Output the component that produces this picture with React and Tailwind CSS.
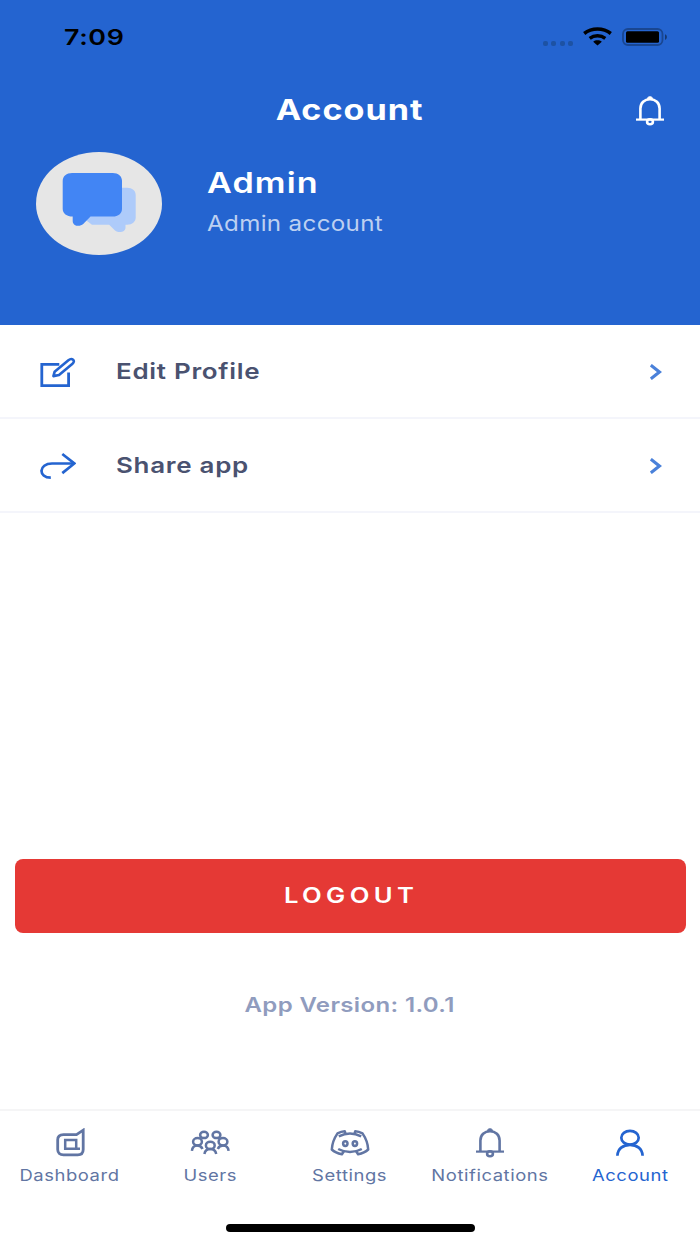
import { clsx } from 'clsx';

// Wide-set label, the whole app uses a horizontally expanded Inter
function Label({ className, children }) {
  return <span className={clsx('inline-block whitespace-nowrap leading-none', className)}>{children}</span>;
}

function BellIcon({ className }) {
  return (
    <svg className={clsx('h-[30px] w-7', className)} viewBox="0 0 28 30" fill="none" stroke="currentColor" strokeWidth="2.6">
      <path d="M4.4 23.5V12.5C4.400 6.800 8.500 3.200 14 3.200S23.600 6.800 23.600 12.500v11" />
      <path d="M0 23.600h28" strokeWidth="2.200" />
      <path d="M11.300 2.500C11.800.2 16.200.2 16.700 2.500z" fill="currentColor" strokeWidth="1" />
      <ellipse cx="14" cy="25.800" rx="2.900" ry="2.500" />
    </svg>
  );
}

function EditIcon() {
  return (
    <svg className="h-[31px] w-9" viewBox="0 0 36 31" fill="none" stroke="currentColor" strokeWidth="2.8">
      <path d="M19.3 7.300H1.800v21.300h26.800V15.500" />
      <path d="M13.400 19.100l1.200-4.300L28.400 3.200c1.600-1.300 3.500-1.500 4.700-.5 1.200 1.100.9 2.800-.6 4L19 18z" strokeWidth="2.600" strokeLinejoin="round" />
    </svg>
  );
}

function ShareIcon() {
  return (
    <svg className="h-7 w-9" viewBox="0 0 36 28" fill="none" stroke="currentColor" strokeWidth="2.700">
      <path d="M34 11.500H12C-1.500 11.500-2 25.700 10.800 25.700" />
      <path d="M22.300 2l12 9.500-12 9.600" />
    </svg>
  );
}

function ChevronIcon() {
  return (
    <svg className="h-4 w-3 text-[#4a81da]" viewBox="0 0 12 16" fill="none" stroke="currentColor" strokeWidth="3.200">
      <path d="M.8 1.200L9.400 8 .8 14.800" />
    </svg>
  );
}

function DashboardIcon() {
  return (
    <svg className="h-[30px] w-[30px]" viewBox="0 0 30 30" fill="none" stroke="currentColor" strokeWidth="2.800">
      <path d="M8.500 6.600H21.500L28.200 2.200V21.500c0 3.500-2.200 5.300-5.500 5.300H8.500c-3.600 0-5.800-1.900-5.800-5.300V11.800c0-3.300 2.200-5.200 5.800-5.200z" />
      <path d="M10.200 11.900h11v8.800h-11zM19 20.700h6" strokeWidth="2.500" />
    </svg>
  );
}

function UsersIcon() {
  return (
    <svg className="h-[30px] w-10" viewBox="0 0 40 30" fill="none" stroke="currentColor" strokeWidth="2.500">
      <ellipse cx="14" cy="6.900" rx="3.900" ry="3.200" />
      <ellipse cx="26.500" cy="6.900" rx="3.900" ry="3.200" />
      <ellipse cx="7.500" cy="13.800" rx="4.400" ry="3.700" />
      <ellipse cx="33" cy="13.800" rx="4.400" ry="3.700" />
      <ellipse cx="20.300" cy="17.400" rx="4.400" ry="3.700" />
      <path d="M1.900 22.900C2.300 19 4.400 17.500 7.300 17.500c2.400 0 4.200 1 5.200 3.400M38.600 22.900c-.4-3.900-2.700-5.400-5.600-5.400-2.400 0-4.200 1-5.200 3.400M14.400 26c.6-3.400 3-4.900 5.900-4.900s5.300 1.500 5.900 4.900" />
    </svg>
  );
}

function SettingsIcon() {
  return (
    <svg className="h-[30px] w-10" viewBox="0 0 40 30" fill="none" stroke="currentColor" strokeWidth="2.500">
      <path d="M15.800 6.500L14.800 3.300C12 3.500 9.700 4.300 7.500 5.400 4 10.500 2.100 16 1.800 21.500c2.600 2.500 6 3.900 10.100 4.700l2.500-3.700" strokeLinejoin="round" />
      <path d="M24.200 6.500l1-3.200c2.800.2 5.100 1 7.300 2.100 3.500 5.100 5.400 10.600 5.700 16.100-2.600 2.500-6 3.900-10.100 4.700l-2.500-3.700" strokeLinejoin="round" />
      <path d="M8.800 8.300c7-3.600 15.400-3.600 22.400 0M8.200 21c7.200 4 16.400 4 23.600 0" />
      <ellipse cx="15.300" cy="15.600" rx="2.200" ry="2.400" />
      <ellipse cx="24.900" cy="15.600" rx="2.200" ry="2.400" />
    </svg>
  );
}

function AccountIcon() {
  return (
    <svg className="h-[30px] w-7" viewBox="0 0 28 30" fill="none" stroke="currentColor" strokeWidth="2.700">
      <ellipse cx="14" cy="9.700" rx="8.700" ry="6.900" />
      <path d="M1.400 27.700C1.700 20.800 7 16.800 14 16.800s12.300 4 12.600 10.900" />
    </svg>
  );
}

function StatusBar() {
  return (
    <div className="flex h-[74px] items-center justify-between pl-16 pr-[32px] text-black">
      <Label className="origin-left scale-x-[1.22] text-[22px] font-semibold tracking-[0.5px]">7:09</Label>
      <div className="flex items-center">
        <div className="mr-[10px] mt-3 flex gap-[3.400px]">
          {[0, 1, 2, 3].map((dot) => (
            <span key={dot} className="h-[5px] w-[5px] rounded-[2px] bg-[#1d52a3]" />
          ))}
        </div>
        <svg className="mr-[10px] h-5 w-[29px]" viewBox="0 0 29 20" fill="none" stroke="currentColor" strokeWidth="3.500">
          <path d="M1.200 6.500C8.800.600 20.200.600 27.800 6.500M6.700 11.300c4.500-3.300 11.100-3.300 15.600 0" />
          <path d="M10.200 14.700c2.400-1.800 6.200-1.800 8.600 0l-4.300 3.800z" fill="currentColor" stroke="none" />
        </svg>
        <svg className="h-[18px] w-[46px]" viewBox="0 0 46 18">
          <rect x="1" y="1" width="39.500" height="16" rx="5" fill="none" stroke="#194691" strokeWidth="1.800" />
          <rect x="4" y="3.200" width="33" height="11.500" rx="1.500" fill="#000" />
          <path d="M43 6.200c2.500.7 2.500 4.900 0 5.600z" fill="#143872" />
        </svg>
      </div>
    </div>
  );
}

function Avatar() {
  return (
    <svg className="h-[103px] w-[126px]" viewBox="0 0 126 103">
      <ellipse cx="63" cy="51.500" rx="63" ry="51.500" fill="#e6e6e6" />
      <path d="M80 35.700h11.200c5 0 8.500 3 8.500 7.200v22.600c0 4.200-3.500 7.200-8.500 7.200h-1.700v2.800c0 4.600-6.500 6-10.500 3l-5.800-5.800H56l-6-4.500z" fill="#aecbfa" />
      <path d="M36.200 21h40.500c5.600 0 9.300 3.300 9.300 7.800v28c0 4.700-3.700 7.800-9.300 7.800H54.500l-7.300 7.500c-3.700 3.300-10.500 1.800-10.500-3.200v-4.300c-6 0-10-3.100-10-7.800v-28c0-4.500 3.700-7.800 9.500-7.800z" fill="#4285f4" />
    </svg>
  );
}

const menuItems = [
  { label: 'Edit Profile', icon: EditIcon },
  { label: 'Share app', icon: ShareIcon },
];

const tabs = [
  { label: 'Dashboard', icon: DashboardIcon },
  { label: 'Users', icon: UsersIcon },
  { label: 'Settings', icon: SettingsIcon },
  { label: 'Notifications', icon: BellIcon },
  { label: 'Account', icon: AccountIcon, active: true },
];

function App() {
  return (
    <div className="flex h-[1244px] w-[700px] flex-col overflow-hidden bg-white font-[Inter,sans-serif]">
      {/* Header */}
      <header className="h-[324.500px] shrink-0 bg-[#2464d0] text-white">
        <StatusBar />
        <div className="grid h-[72px] grid-cols-[1fr_auto_1fr] items-center px-9">
          <Label className="col-start-2 scale-x-[1.22] text-[28px] font-bold tracking-[0.8px]">Account</Label>
          <BellIcon className="mt-px justify-self-end" />
        </div>
        <div className="mt-1.5 flex pl-9">
          <Avatar />
          <div className="ml-[45px] flex flex-col items-start pt-[17px]">
            <Label className="origin-left scale-x-[1.22] text-[28px] font-semibold tracking-[0.9px]">Admin</Label>
            <Label className="mt-4 origin-left scale-x-[1.15] text-[21px] tracking-[0.3px] text-[#bdd0f1]">Admin account</Label>
          </div>
        </div>
      </header>

      {/* Menu */}
      <nav>
        {menuItems.map(({ label, icon: Icon }) => (
          <button key={label} className="flex h-[94px] w-full items-center border-b-2 border-[#f4f5fb] pl-10 pr-[38px]">
            <span className="flex w-[76px] pt-[3px] text-[#2464d0]">
              <Icon />
            </span>
            <Label className="mt-px origin-left scale-x-[1.18] text-[22px] font-semibold tracking-[0.6px] text-[#4a5270]">{label}</Label>
            <span className="ml-auto pt-[3px]">
              <ChevronIcon />
            </span>
          </button>
        ))}
      </nav>

      {/* Logout */}
      <div className="mt-auto px-[14.500px]">
        <button className="flex h-[74px] w-full items-center justify-center rounded-lg bg-[#e53935] pl-[3px] text-white">
          <Label className="scale-x-[1.22] text-[21px] font-semibold tracking-[3.600px]">LOGOUT</Label>
        </button>
      </div>
      <div className="flex h-[176.500px] items-start justify-center pt-[62px]">
        <Label className="scale-x-[1.200] text-[20px] font-semibold tracking-[0.3px] text-[#909cbe]">App Version: 1.0.1</Label>
      </div>

      {/* Bottom tabs */}
      <footer className="h-[135px] shrink-0 border-t-2 border-[#f5f5f6]">
        <div className="grid grid-cols-5 pt-[17px]">
          {tabs.map(({ label, icon: Icon, active }) => (
            <button key={label} className={clsx('flex flex-col items-center', active ? 'text-[#2464d0]' : 'text-[#6175a3]')}>
              <Icon />
              <Label className="mt-[9px] scale-x-[1.150] text-[16px] tracking-[0.5px]">{label}</Label>
            </button>
          ))}
        </div>
        <div className="mx-auto mt-[41px] h-2 w-[249px] rounded-full bg-black" />
      </footer>
    </div>
  );
}

export default App;
